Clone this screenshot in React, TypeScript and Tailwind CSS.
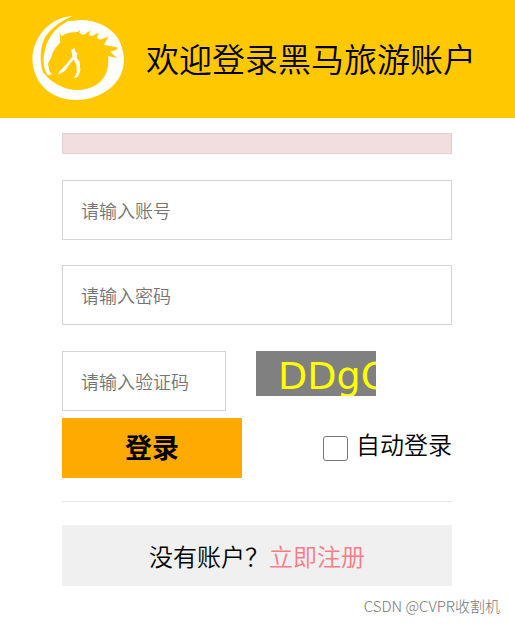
import React from "react";

function HorseLogo() {
  return (
    <svg viewBox="36 33 276 252" className="h-21 w-23 shrink-0" role="img" aria-label="黑马旅游">
      <path
        fill="#fff"
        d="M155 33C105 38 66 70 48 112C31 150 34 190 56 228C80 265 120 285 170 285C225 284 275 258 299 216C318 180 315 135 293 98C270 64 225 44 180 45L150 47Z"
      />
      <path
        fill="#ffc800"
        d="M160 32C112 52 84 78 71 105C59 135 59 175 70 204L83 210C70 190 68 170 74 140C80 110 96 74 143 49L190 43L190 30Z"
      />
      <path
        fill="#ffc800"
        d="M118 80L124 94L134 88C142 84 152 82 162 82L172 81L180 75L178 83L188 90L200 84L212 76L206 91L216 93L236 83L231 99L240 104L266 95L256 112L252 120L292 127L291 134L270 140L292 159L264 153C268 180 262 205 246 225C224 248 200 255 168 255C130 253 92 234 70 202L84 211L96 208L88 198L84 176L94 156L99 140L108 127L121 112Z"
      />
      <path
        fill="#fff"
        d="M154 134L164 129L166 140L172 145L170 158L179 170L181 196L174 215L162 220L170 204L170 182L161 163L150 176L135 197L116 209L116 201L128 190L145 170L157 155Z"
      />
    </svg>
  );
}

const field =
  "block h-15 border border-[#d5d5d5] bg-white px-[18px] text-[18px] font-[350] text-black outline-none placeholder:text-[#757575]";

export default function App() {
  return (
    <div className="bg-white font-['Noto_Sans_CJK_SC',sans-serif] font-[350] text-black">
      <header className="flex h-[118px] items-center bg-[#ffc800] pb-0.5 pl-8">
        <HorseLogo />
        <h1 className="ml-[22px] whitespace-nowrap text-[33px] font-[350] leading-[48px]">欢迎登录黑马旅游账户</h1>
      </header>

      <main className="pr-[63px] pl-[62px] pt-[15px]">
        <div role="alert" className="h-[21px] border border-[#e6cdd1] bg-[#f2dede]" />

        <form onSubmit={(e) => e.preventDefault()}>
          <input aria-label="账号" placeholder="请输入账号" className={`${field} mt-[26px] w-full`} />
          <input
            aria-label="密码"
            type="password"
            placeholder="请输入密码"
            className={`${field} mt-[25px] w-full`}
          />
          <div className="mt-[26px] flex items-start gap-[30px]">
            <input aria-label="验证码" placeholder="请输入验证码" className={`${field} w-[164px]`} />
            <div className="h-[45px] w-[120px] overflow-hidden whitespace-nowrap bg-[#808080] pl-[22px] font-['DejaVu_Sans',sans-serif] text-[38px] font-normal leading-[51px] text-[#ffff00]">
              DDgC
            </div>
          </div>
          <div className="mt-[7px] flex items-start justify-between">
            <button type="submit" className="h-15 w-[180px] bg-[#ffaa00] pb-0.5 text-[27px] font-bold">
              登录
            </button>
            <label className="flex items-start gap-2 pt-2 text-[24px] leading-9">
              <input
                type="checkbox"
                className="mt-2.5 size-[25px] appearance-none rounded-[3px] border border-[#767676] bg-white checked:bg-[#0075ff]"
              />
              自动登录
            </label>
          </div>
        </form>

        <hr className="mt-[23px] border-[#e8e8e8]" />

        <p className="mt-[23px] h-[61px] bg-[#f0f0f0] text-center text-[24px] leading-[61px]">
          没有账户？
          <a href="#register" className="text-[#f77c85]">
            立即注册
          </a>
        </p>
      </main>

      <footer className="pr-[15px] pt-2.5 text-right text-[15px] font-light leading-5 text-[#777]">CSDN @CVPR收割机</footer>
    </div>
  );
}
